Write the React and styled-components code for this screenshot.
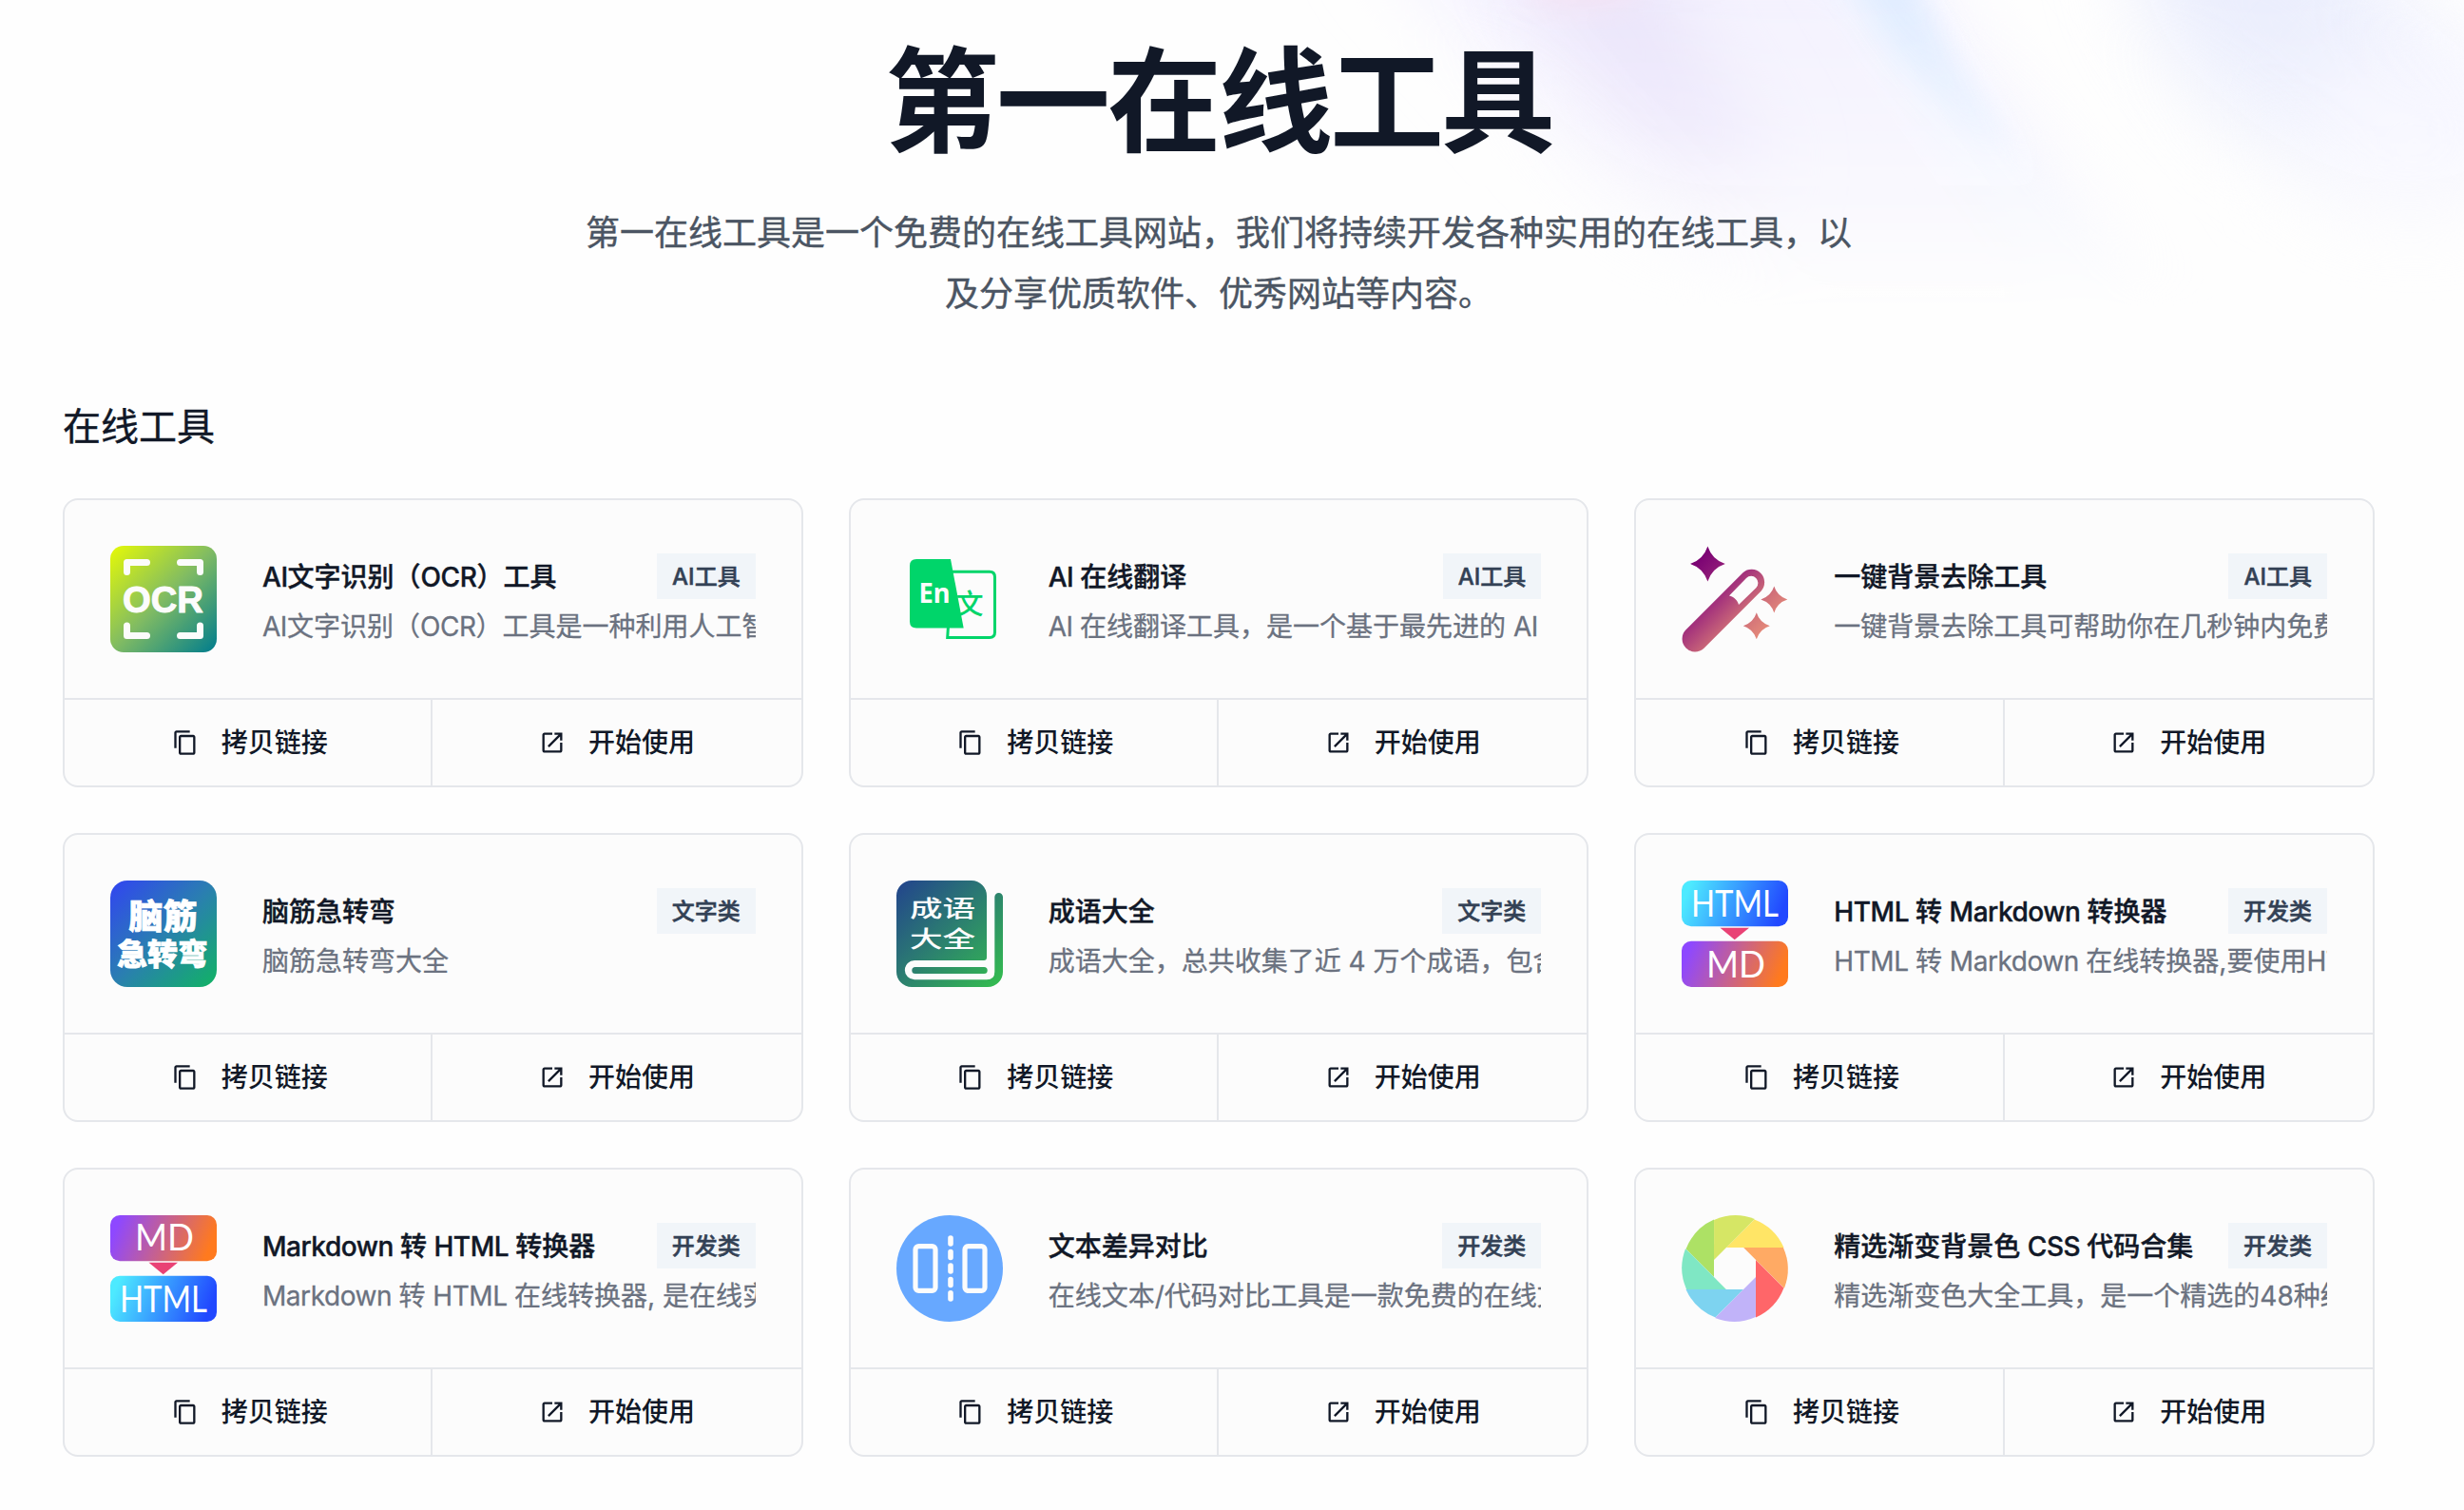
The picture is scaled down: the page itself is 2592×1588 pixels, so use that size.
import React from "react";
import styled, { createGlobalStyle } from "styled-components";

const sans = `Inter, "Noto Sans CJK SC", sans-serif`;

const GlobalStyle = createGlobalStyle`
  * { box-sizing: border-box; }
  html, body { margin: 0; background: #fefefe; overflow: hidden; }
  body { font-family: ${sans}; color: #111827; -webkit-font-smoothing: antialiased; }
  h1, h2, h3, p { margin: 0; }
`;

const Page = styled.div`
  position: relative;
  width: 2592px;
  height: 1588px;
  overflow: hidden;
  padding: 48px 94px 0 66px;
`;

const Aurora = styled.svg`
  position: absolute;
  top: 0;
  right: 0;
`;

const Hero = styled.header`
  position: relative;
  display: flex;
  flex-direction: column;
  align-items: center;
  gap: 45px;
`;

const HeroTitle = styled.h1`
  font-size: 120px;
  line-height: 120px;
  font-weight: 700;
  letter-spacing: -3px;
  white-space: nowrap;
`;

const HeroText = styled.p`
  width: 1344px;
  font-size: 36px;
  line-height: 64px;
  text-align: center;
  color: #4b5563;
  -webkit-text-stroke: 0.4px currentColor;
`;

const Section = styled.section`
  position: relative;
  display: flex;
  flex-direction: column;
  gap: 46px;
  margin-top: 78px;
`;

const SectionTitle = styled.h2`
  font-size: 40px;
  line-height: 59px;
  font-weight: 400;
  -webkit-text-stroke: 0.4px currentColor;
`;

const Grid = styled.div`
  display: grid;
  grid-template-columns: repeat(3, 1fr);
  gap: 48px;
`;

const Card = styled.article`
  display: flex;
  flex-direction: column;
  height: 304px;
  border: 2px solid #e5e7eb;
  border-radius: 16px;
  background: #fcfcfc;
  overflow: hidden;
`;

const CardBody = styled.div`
  display: flex;
  align-items: center;
  gap: 48px;
  height: 208px;
  padding: 48px;
`;

const Icon = styled.svg`
  flex: none;
  width: 112px;
  height: 112px;
  overflow: visible;
`;

const Info = styled.div`
  flex: 1;
  min-width: 0;
`;

const InfoHead = styled.div`
  display: flex;
  align-items: center;
  justify-content: space-between;
  height: 48px;
`;

const Name = styled.h3`
  padding-top: 2px;
  font-size: 28px;
  line-height: 40px;
  font-weight: 500;
  white-space: nowrap;
  -webkit-text-stroke: 0.4px currentColor;
`;

const Latin = styled.span`
  letter-spacing: -0.45px;
`;

const Tag = styled.span`
  flex: none;
  padding: 1px 16px 0;
  background: #f1f5f9;
  color: #334155;
  font-size: 24px;
  line-height: 47px;
  font-weight: 500;
  -webkit-text-stroke: 0.5px currentColor;
`;

const Description = styled.p`
  margin-top: 9px;
  font-size: 28px;
  line-height: 40px;
  color: #6b7280;
  white-space: nowrap;
  overflow: hidden;
  -webkit-text-stroke: 0.3px currentColor;
`;

const Actions = styled.div`
  display: grid;
  grid-template-columns: 1fr 1fr;
  flex: 1;
  border-top: 2px solid #e5e7eb;
`;

const Action = styled.button`
  display: flex;
  align-items: center;
  justify-content: center;
  gap: 24px;
  padding: 0 0 0 2px;
  border: 0;
  background: none;
  color: #111827;
  font-family: inherit;
  font-size: 28px;
  line-height: 40px;
  font-weight: 500;

  & + & {
    margin-left: -2px;
    padding-left: 0;
    border-left: 2px solid #e5e7eb;
  }
`;

const ActionIcon = styled.svg`
  width: 28px;
  height: 28px;
  fill: currentColor;
`;

const CopyIcon = () => (
  <ActionIcon viewBox="0 0 24 24">
    <path d="M16 1H4c-1.1 0-2 .9-2 2v14h2V3h12V1zm3 4H8c-1.1 0-2 .9-2 2v14c0 1.1.9 2 2 2h11c1.1 0 2-.9 2-2V7c0-1.1-.9-2-2-2zm0 16H8V7h11v14z" />
  </ActionIcon>
);

const OpenIcon = () => (
  <ActionIcon viewBox="0 0 24 24">
    <path d="M19 19H5V5h7V3H5c-1.11 0-2 .9-2 2v14c0 1.1.89 2 2 2h14c1.1 0 2-.9 2-2v-7h-2v7zM14 3v2h3.59l-9.83 9.83 1.41 1.41L19 6.41V10h2V3h-7z" />
  </ActionIcon>
);

const OcrIcon = () => (
  <Icon viewBox="0 0 112 112">
    <defs>
      <linearGradient id="ocr" x1="0" y1="0" x2="1" y2="1">
        <stop offset="0.03" stopColor="#e0f60c" />
        <stop offset="0.5" stopColor="#80bb63" />
        <stop offset="0.97" stopColor="#07808b" />
      </linearGradient>
    </defs>
    <rect width="112" height="112" rx="14" fill="url(#ocr)" />
    <path
      d="M17.5 27.5V17.5H38.5M73.5 17.5H94.5V27.5M17.5 84V94.5H38.5M73.5 94.5H94.5V84"
      fill="none"
      stroke="#fcfcfc"
      strokeWidth="7"
      strokeLinecap="round"
      strokeLinejoin="round"
    />
    <text
      x="13"
      y="70"
      fontFamily='"Liberation Sans", sans-serif'
      fontWeight="700"
      fontSize="39"
      textLength="85"
      lengthAdjust="spacingAndGlyphs"
      fill="#fcfcfc"
      stroke="#fcfcfc"
      strokeWidth="1"
      strokeLinejoin="round"
    >
      OCR
    </text>
  </Icon>
);

const TranslateIcon = () => (
  <Icon viewBox="0 0 112 112">
    <path
      d="M54.5 84 53.7 96.5H98Q103.5 96.5 103.5 91V33Q103.5 27.2 98 27.2H58"
      fill="none"
      stroke="#00d56a"
      strokeWidth="3"
    />
    <text
      x="77"
      y="71.5"
      textAnchor="middle"
      fontFamily='"Noto Sans CJK SC", sans-serif'
      fontWeight="500"
      fontSize="29"
      fill="#00d56a"
    >
      文
    </text>
    <path d="M14 21Q14 14 21 14H57L70.7 86.5H21Q14 86.5 14 79.5Z" fill="#00d56a" />
    <text
      x="23.5"
      y="60"
      fontFamily='"Noto Sans", sans-serif'
      fontWeight="700"
      fontSize="29"
      textLength="33"
      lengthAdjust="spacingAndGlyphs"
      fill="#fcfcfc"
    >
      En
    </text>
  </Icon>
);

const WandIcon = () => (
  <Icon viewBox="0 0 112 112">
    <defs>
      <linearGradient id="wand" gradientUnits="userSpaceOnUse" x1="0" y1="0" x2="112" y2="112">
        <stop offset="0.15" stopColor="#7c0474" />
        <stop offset="0.43" stopColor="#a4337c" />
        <stop offset="0.58" stopColor="#c76378" />
        <stop offset="0.82" stopColor="#e88f7a" />
      </linearGradient>
    </defs>
    <g fill="url(#wand)">
      <path d="M27.4 0.5Q32 14.5 45.8 19Q32 23.5 27.4 37.5Q22.8 23.5 9 19Q22.8 14.5 27.4 0.5Z" />
      <path d="M97.3 42.5Q100.5 53 111.3 56.4Q100.5 59.8 97.3 70.4Q94 59.8 83.3 56.4Q94 53 97.3 42.5Z" />
      <path d="M78.8 70.3Q82 80.8 92.8 84.2Q82 87.6 78.8 98.2Q75.5 87.6 64.8 84.2Q75.5 80.8 78.8 70.3Z" />
      <path
        fillRule="evenodd"
        d="M4 88.8 64.5 28.3A13.6 13.6 0 0 1 83.7 47.5L23.2 108A13.6 13.6 0 0 1 4 88.8ZM50 52.5C55 53.5 59 57.5 60 62L78.3 44.2A7.2 7.2 0 0 0 68 34Z"
      />
    </g>
  </Icon>
);

const BrainIcon = () => (
  <Icon viewBox="0 0 112 112">
    <defs>
      <linearGradient id="brain" x1="0" y1="0" x2="1" y2="1">
        <stop offset="0.06" stopColor="#304bea" />
        <stop offset="0.5" stopColor="#2a7fb0" />
        <stop offset="0.97" stopColor="#12b068" />
      </linearGradient>
    </defs>
    <rect width="112" height="112" rx="18" fill="url(#brain)" />
    <g
      fontFamily='"Noto Sans CJK SC", sans-serif'
      fontWeight="900"
      fill="#fff"
      stroke="#fff"
      strokeWidth="0.7"
      textAnchor="middle"
    >
      <text x="55.5" y="51" fontSize="36">脑筋</text>
      <text x="55" y="88.5" fontSize="32">急转弯</text>
    </g>
  </Icon>
);

const IdiomIcon = () => (
  <Icon viewBox="0 0 112 112">
    <defs>
      <linearGradient id="idiom" gradientUnits="userSpaceOnUse" x1="0" y1="0" x2="112" y2="112">
        <stop offset="0.05" stopColor="#23498a" />
        <stop offset="0.5" stopColor="#2c806f" />
        <stop offset="0.95" stopColor="#33b951" />
      </linearGradient>
    </defs>
    <g fill="url(#idiom)">
      <path d="M0 16A16 16 0 0 1 16 0H79A16 16 0 0 1 95 16V81Q95 84 92 84H19A10.15 10.15 0 0 0 19 104.3H95Q103.3 104.3 103.3 96V17.3A4.35 4.35 0 0 1 112 17.3V96A16 16 0 0 1 96 112H16A16 16 0 0 1 0 96Z" />
      <rect x="16.3" y="91" width="79.4" height="7" rx="3.5" />
    </g>
    <g
      fontFamily='"Noto Sans CJK SC", sans-serif'
      fontWeight="500"
      fontSize="24"
      fill="#fcfcfc"
      textAnchor="middle"
      transform="translate(48.5 0) scale(1.44 1)"
    >
      <text y="38.5">成语</text>
      <text y="70.5">大全</text>
    </g>
  </Icon>
);

const HTML_STOPS = ["#4deaff", "#2148ff"];
const MD_STOPS = ["#8e48ff", "#ff7a1e"];

const Badge = ({ id, y, stops, label, x, length, baseline }) => (
  <g transform={`translate(0 ${y})`}>
    <defs>
      <linearGradient id={id} gradientUnits="userSpaceOnUse" x1="6" y1="4" x2="104" y2="44">
        <stop offset="0.03" stopColor={stops[0]} />
        <stop offset="0.97" stopColor={stops[1]} />
      </linearGradient>
    </defs>
    <rect width="112" height="48.3" rx="10" fill={`url(#${id})`} />
    <text
      x={x}
      y={baseline}
      fontFamily="Lato, sans-serif"
      fontSize="38"
      textLength={length}
      lengthAdjust="spacingAndGlyphs"
      fill="#fff"
    >
      {label}
    </text>
  </g>
);

const ConvertIcon = ({ name, from }) => {
  const html = { stops: HTML_STOPS, label: "HTML", x: 10, length: 92 };
  const md = { stops: MD_STOPS, label: "MD", x: 26, length: 62 };
  const [top, bottom] = from === "html" ? [html, md] : [md, html];
  return (
    <Icon viewBox="0 0 112 112">
      <Badge id={`${name}-top`} y={0} baseline={from === "html" ? 37.7 : 36.5} {...top} />
      <path d="M40.5 49.8H71L55.7 62.2Z" fill="#e94275" />
      <Badge id={`${name}-bottom`} y={63.7} baseline={38} {...bottom} />
    </Icon>
  );
};

const DiffIcon = () => (
  <Icon viewBox="0 0 112 112">
    <circle cx="56" cy="56" r="56" fill="#67a8ff" />
    <g fill="none" stroke="#fcfcfc" strokeWidth="5.2">
      <rect x="20" y="32.6" width="21" height="46.8" rx="3.5" />
      <rect x="72" y="32.6" width="21" height="46.8" rx="3.5" />
      <path d="M57 24V30M57 38.5V44.5M57 53V59M57 67.5V73.5M57 81.8V88" strokeWidth="5.6" strokeLinecap="round" />
    </g>
  </Icon>
);

const WHEEL = ["#ade165", "#7fe7c4", "#7dd3f0", "#c1b3f9", "#ff6669", "#ffaa64", "#ffe566", "#d6e665"];

const WheelIcon = () => (
  <Icon viewBox="-56 -56 112 112">
    {WHEEL.map((color, i) => (
      <path
        key={color}
        d="M-22 -51.5V9.1L-51.5 -20.5A56 56 0 0 1 -22 -51.5Z"
        fill={color}
        transform={`rotate(${-45 * i})`}
      />
    ))}
  </Icon>
);

const TOOLS = [
  { name: "AI文字识别（OCR）工具", tag: "AI工具", text: "AI文字识别（OCR）工具是一种利用人工智", icon: <OcrIcon /> },
  { name: "AI 在线翻译", tag: "AI工具", text: "AI 在线翻译工具，是一个基于最先进的 AI", icon: <TranslateIcon /> },
  { name: "一键背景去除工具", tag: "AI工具", text: "一键背景去除工具可帮助你在几秒钟内免费", icon: <WandIcon /> },
  { name: "脑筋急转弯", tag: "文字类", text: "脑筋急转弯大全", icon: <BrainIcon /> },
  { name: "成语大全", tag: "文字类", text: "成语大全，总共收集了近 4 万个成语，包含", icon: <IdiomIcon /> },
  { name: "HTML 转 Markdown 转换器", tag: "开发类", text: "HTML 转 Markdown 在线转换器,要使用HT", icon: <ConvertIcon name="h2m" from="html" /> },
  { name: "Markdown 转 HTML 转换器", tag: "开发类", text: "Markdown 转 HTML 在线转换器, 是在线实", icon: <ConvertIcon name="m2h" from="md" /> },
  { name: "文本差异对比", tag: "开发类", text: "在线文本/代码对比工具是一款免费的在线文", icon: <DiffIcon /> },
  { name: "精选渐变背景色 CSS 代码合集", tag: "开发类", text: "精选渐变色大全工具，是一个精选的48种经", icon: <WheelIcon /> },
];

/* Latin runs are set slightly tighter than the Chinese around them. */
const mixed = (text) =>
  text.split(/([A-Za-z]+ ?)/).map((part, i) => (i % 2 ? <Latin key={i}>{part}</Latin> : part));

const AuroraBackdrop = () => (
  <Aurora width="1292" height="380" viewBox="1300 0 1292 380">
    <defs>
      <filter id="soft" x="-50%" y="-50%" width="200%" height="200%">
        <feGaussianBlur stdDeviation="42" />
      </filter>
      <filter id="edge" x="-50%" y="-50%" width="200%" height="200%">
        <feGaussianBlur stdDeviation="16" />
      </filter>
      <linearGradient id="fade" x1="0" y1="0" x2="0" y2="1">
        <stop offset="0" stopColor="#fff" />
        <stop offset="0.35" stopColor="#fff" stopOpacity="0.75" />
        <stop offset="0.85" stopColor="#fff" stopOpacity="0" />
      </linearGradient>
      <mask id="veil" maskUnits="userSpaceOnUse" x="1300" y="0" width="1292" height="380">
        <rect x="1300" width="1292" height="380" fill="url(#fade)" />
      </mask>
    </defs>
    <g mask="url(#veil)">
      <path d="M1440 -80H1980L2300 380H1860Z" fill="#f4f2fe" filter="url(#soft)" />
      <path d="M1980 -40L2270 340H2160L1900 -40Z" fill="#f2f4ff" filter="url(#edge)" />
      <path d="M1580 -60H1720L1860 180L1810 210L1710 130Z" fill="#e9e3fa" filter="url(#soft)" />
      <ellipse cx="1665" cy="-14" rx="60" ry="22" fill="#f5e4f4" filter="url(#edge)" />
      <path d="M1935 -40H2005L2055 70L2120 170L2060 120L1990 50Z" fill="#dfecff" opacity="0.9" filter="url(#edge)" />
      <ellipse cx="2410" cy="40" rx="190" ry="110" transform="rotate(42 2410 40)" fill="#ebeefd" filter="url(#soft)" />
      <ellipse cx="2540" cy="150" rx="120" ry="110" fill="#f5f5ff" filter="url(#soft)" />
    </g>
  </Aurora>
);

export default function App() {
  return (
    <Page lang="zh-CN">
      <GlobalStyle />
      <AuroraBackdrop />
      <Hero>
        <HeroTitle>第一在线工具</HeroTitle>
        <HeroText>
          第一在线工具是一个免费的在线工具网站，我们将持续开发各种实用的在线工具，以及分享优质软件、优秀网站等内容。
        </HeroText>
      </Hero>
      <Section>
        <SectionTitle>在线工具</SectionTitle>
        <Grid>
          {TOOLS.map((tool) => (
            <Card key={tool.name}>
              <CardBody>
                {tool.icon}
                <Info>
                  <InfoHead>
                    <Name>{mixed(tool.name)}</Name>
                    <Tag>{tool.tag}</Tag>
                  </InfoHead>
                  <Description>{mixed(tool.text)}</Description>
                </Info>
              </CardBody>
              <Actions>
                <Action type="button">
                  <CopyIcon />
                  拷贝链接
                </Action>
                <Action type="button">
                  <OpenIcon />
                  开始使用
                </Action>
              </Actions>
            </Card>
          ))}
        </Grid>
      </Section>
    </Page>
  );
}
